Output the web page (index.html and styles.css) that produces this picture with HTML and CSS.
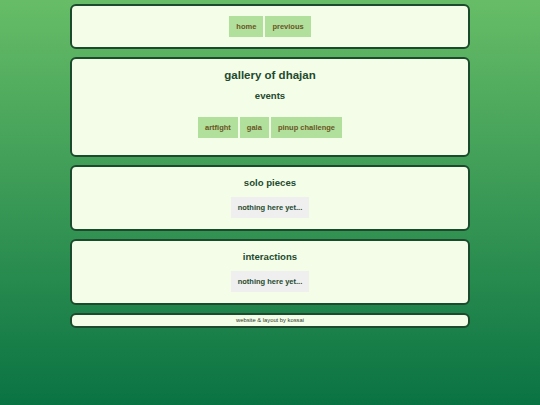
FILE: index.html
```html
<!DOCTYPE html>
<html lang="en">
<head>
<meta charset="utf-8">
<title>gallery of dhajan</title>
<link rel="stylesheet" href="styles.css">
</head>
<body>
<div class="page">
  <nav class="box nav">
    <div class="btns">
      <a class="btn" href="#">home</a>
      <a class="btn" href="#">previous</a>
    </div>
  </nav>
  <section class="box head">
    <h1 class="title">gallery of dhajan</h1>
    <h2 class="sub events">events</h2>
    <div class="btns">
      <a class="btn" href="#">artfight</a>
      <a class="btn" href="#">gala</a>
      <a class="btn" href="#">pinup challenge</a>
    </div>
  </section>
  <section class="box">
    <h2 class="sub">solo pieces</h2>
    <div class="btns"><span class="empty">nothing here yet...</span></div>
  </section>
  <section class="box">
    <h2 class="sub">interactions</h2>
    <div class="btns"><span class="empty">nothing here yet...</span></div>
  </section>
  <footer class="box foot">website &amp; layout by kossai</footer>
</div>
</body>
</html>
```
FILE: styles.css
```css
html, body {
  margin: 0;
  padding: 0;
}
body {
  min-height: 405px;
  background: linear-gradient(to bottom, #67bd67 0%, #0a7343 100%);
  font-family: "Liberation Sans", Arial, sans-serif;
  color: #1e4a2e;
}
.page {
  width: 400px;
  margin: 0 auto;
  padding-top: 4px;
  display: flex;
  flex-direction: column;
  gap: 8px;
}
.box {
  box-sizing: border-box;
  background: #f4fde8;
  border: 2px solid #1c4a2c;
  border-radius: 6px;
  padding: 10px 10px 11px;
  text-align: center;
}
.nav {
  padding: 10px 10px 10px;
}
.head {
  padding: 9px 10px 17px;
}
.btns {
  display: flex;
  justify-content: center;
  gap: 2px;
}
.btn {
  display: block;
  background: #b0e09c;
  color: #6b5424;
  font-weight: bold;
  font-size: 7.5px;
  line-height: 9px;
  padding: 6px 7px;
  text-decoration: none;
}
.empty {
  display: block;
  background: #efefef;
  color: #1e4a2e;
  font-weight: bold;
  font-size: 7.5px;
  line-height: 9px;
  padding: 6px 7px;
}
.title {
  margin: 0 0 8px;
  font-size: 11.5px;
  line-height: 14px;
  color: #1e4a2e;
}
.sub {
  margin: 0 0 8px;
  font-size: 9.6px;
  line-height: 12px;
  color: #1e4a2e;
}
.events {
  margin-bottom: 15px;
}
.foot {
  padding: 1px 10px;
  font-size: 5.8px;
  line-height: 9px;
  color: #2a3a2a;
}
```
